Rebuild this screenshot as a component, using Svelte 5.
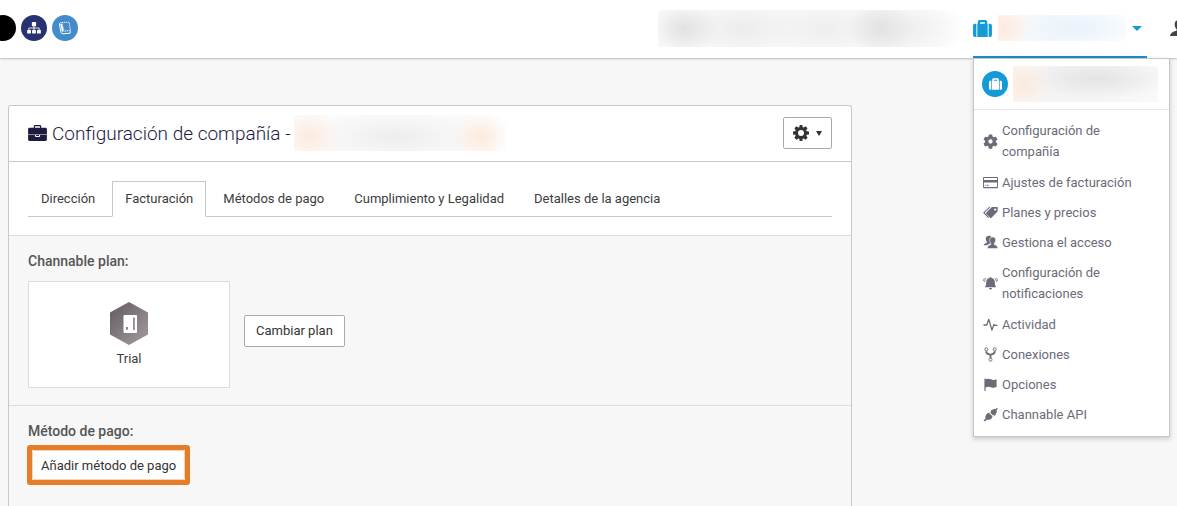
<script lang="ts">
	const tabs = ['Dirección', 'Facturación', 'Métodos de pago', 'Cumplimiento y Legalidad', 'Detalles de la agencia']

	const menuItems = [
		{ icon: 'gear', label: 'Configuración de compañía', tall: true },
		{ icon: 'card', label: 'Ajustes de facturación' },
		{ icon: 'tags', label: 'Planes y precios' },
		{ icon: 'users', label: 'Gestiona el acceso' },
		{ icon: 'bell', label: 'Configuración de notificaciones', tall: true },
		{ icon: 'pulse', label: 'Actividad' },
		{ icon: 'fork', label: 'Conexiones' },
		{ icon: 'flag', label: 'Opciones' },
		{ icon: 'plug', label: 'Channable API' }
	]

	let activeTab = $state('Facturación')
	let menuOpen = $state(true)
</script>

{#snippet suitcase()}
	<svg viewBox="0 0 20 18" fill="currentColor" aria-hidden="true">
		<path d="M3.500 4v14H2a2 2 0 0 1-2-2V6a2 2 0 0 1 2-2zM16.500 4v14H18a2 2 0 0 0 2-2V6a2 2 0 0 0-2-2z" />
		<path fill-rule="evenodd" d="M4.500 4H5V2q0-2 2-2h6q2 0 2 2v2h.5v14h-11zM7.500 2.300V4h5V2.300z" />
	</svg>
{/snippet}

{#snippet menuIcon(name: string)}
	<svg class="menu-icon" viewBox="0 0 16 16" fill="currentColor" aria-hidden="true">
		{#if name === 'gear'}
			<path fill-rule="evenodd" d="M6.300.5h3.400l.5 2.200 1.400.8 2.200-.7 1.700 3-1.700 1.500v1.500l1.700 1.500-1.700 3-2.200-.7-1.400.8-.5 2.200H6.300l-.5-2.200-1.400-.8-2.200.7-1.700-3L2.200 8.800V7.300L.5 5.800l1.700-3 2.200.7 1.400-.8zM8 5.700a2.300 2.300 0 1 0 0 4.600 2.300 2.300 0 0 0 0-4.600z" />
		{:else if name === 'card'}
			<path fill-rule="evenodd" d="M1 2h14q1 0 1 1v10q0 1-1 1H1q-1 0-1-1V3q0-1 1-1zM1 3.200v2h14v-2zM1 8v4.800h14V8z" />
			<path d="M2 10.500h1v1H2zM4 10.500h2v1H4z" />
		{:else if name === 'tags'}
			<path fill-rule="evenodd" d="M9.500 2.200 15 2q.8 0 .8.800L15.500 7 9 13.500q-.7.600-1.400 0L3.600 9.500q-.6-.7 0-1.400zM13 3.700a1.200 1.200 0 1 0 0 2.400 1.200 1.200 0 0 0 0-2.400z" />
			<path d="M7.200 2.300 1 8.200l5 5.300" fill="none" stroke="currentColor" stroke-width="1.200" />
		{:else if name === 'users'}
			<path d="M5.500 1q2-1 3.300 1Q7 4 7.500 7l1 1.500-4.500 2.500H.5q0-1.800 3.500-2.800V7Q2.500 5.500 3 3.200 3.500 1 5.500 1z" />
			<path d="M10.500 2c2.200 0 3.300 1.700 3 3.700-.2 1.500-.7 2.700-1.500 3.300v1.200c2.200.8 3.700 1.500 4 4.300H4.500c.2-2.800 1.700-3.500 3.800-4.300V9c-.8-.8-1.200-2-1.200-3.500C7.300 3.200 8.500 2 10.500 2z" stroke="#fff" stroke-width=".6" />
		{:else if name === 'bell'}
			<path d="M8 1q1 0 1 1.200 3.500.7 3.500 4.300 0 3.500 1.500 5.500H2q1.500-2 1.500-5.500Q3.500 2.900 7 2.200 7 1 8 1zM6.300 12.700h3.400q-.3 1.800-1.700 1.800t-1.700-1.800z" />
			<path d="M3.300 2.200Q1.800 3.800 1.700 6.500M12.700 2.200q1.500 1.600 1.600 4.300M1.600 2.200Q.6 3.500.3 5.500M14.400 2.200q1 1.300 1.300 3.300" fill="none" stroke="currentColor" stroke-width=".8" />
		{:else if name === 'pulse'}
			<path d="M.5 8.500H4L6.200 2.500l3.300 11.500L11.700 8l.8 1h3" fill="none" stroke="currentColor" stroke-width="1.400" stroke-linejoin="round" />
		{:else if name === 'fork'}
			<g fill="none" stroke="currentColor">
				<circle cx="3.500" cy="2.500" r="1.600" /><circle cx="12.500" cy="2.500" r="1.600" /><circle cx="8" cy="13.500" r="1.600" />
				<path d="M3.500 4.500q0 2.500 2.300 3 2.200.5 2.200 1.500v3M12.500 4.500q0 2.500-2.300 3Q8 8 8 9" stroke-width="2" />
			</g>
		{:else if name === 'flag'}
			<path d="M1.500 1.500h1.200v1q2.800-1.500 5.800 0t6 0v8q-3 1.700-6 .400t-5.800.2V15H1.500z" />
		{:else if name === 'plug'}
			<path d="m8.500 3.800 3-1.800q1-.2 1.700.3L14.800.8l1 1-1.400 1.600q.7.800.2 2.300l-1.800 3.500-2.500-.6L8 6.500zM6.700 6l1.500 2.300 2 1.200q-.5 2.700-2.200 3.500-2.200 1-4 .6L1.800 15.500l-1.200-1.200 2-2.100q-.5-2.200.7-3.900Q4.700 6 6.700 6z" />
		{/if}
	</svg>
{/snippet}

<div class="page">
	<header class="topbar">
		<nav class="apps" aria-label="Aplicaciones">
			<button class="app black" aria-label="Inicio"></button>
			<button class="app navy" aria-label="Estructura">
				<svg viewBox="0 0 16 14" width="14" height="12" fill="currentColor">
					<rect x="5.500" y="0" width="5" height="5" rx="1" />
					<rect x="0" y="9" width="4.500" height="4.500" rx="1" />
					<rect x="5.750" y="9" width="4.500" height="4.500" rx="1" />
					<rect x="11.500" y="9" width="4.500" height="4.500" rx="1" />
					<path d="M2 9V7h12v2M8 4v5" fill="none" stroke="currentColor" />
				</svg>
			</button>
			<button class="app blue" aria-label="Documentación">
				<svg viewBox="0 0 14 14" width="14" height="14" fill="none" stroke="currentColor">
					<path d="M3.800 1.500 11 1.200l1.500 8.300-6.500.7z" stroke-width=".8" stroke-dasharray="1.500 .5" />
					<path d="M2.800 1.500Q1 2 1.500 4l1.600 7.500q.5 1.500 2 1.300l7-.6.3-2" />
					<path d="M3 3 4.800 10.500" stroke-width="1.600" />
				</svg>
			</button>
		</nav>

		<div class="redacted search"></div>

		<div class="company">
			<button class="company-toggle" aria-label="Compañía" aria-expanded={menuOpen} onclick={() => (menuOpen = !menuOpen)}>
				{@render suitcase()}
				<span class="redacted company-name"></span>
				<span class="caret"></span>
			</button>

			{#if menuOpen}
				<div class="menu">
					<div class="menu-head">
						<span class="badge">{@render suitcase()}</span>
						<span class="redacted menu-name"></span>
					</div>
					<ul>
						{#each menuItems as item}
							<li>
								<a href="#{item.icon}" class:tall={item.tall}>
									{@render menuIcon(item.icon)}
									<span>{item.label}</span>
								</a>
							</li>
						{/each}
					</ul>
				</div>
			{/if}
		</div>

		<button class="user" aria-label="Usuario">
			<svg viewBox="0 0 18 16" width="18" height="16" fill="currentColor">
				<path d="M9 0c3 0 4.500 2 4.300 5-.2 2-.9 3.400-2 4.300v1.200c3 1 6 2 6.700 5.500H0c.7-3.500 3.700-4.500 6.700-5.500V9.300c-1.100-.9-1.800-2.300-2-4.300C4.500 2 6 0 9 0z" />
			</svg>
		</button>
	</header>

	<main class="card">
		<div class="card-head">
			<svg class="briefcase" viewBox="0 0 20 17" aria-hidden="true">
				<path fill="currentColor" fill-rule="evenodd" d="M6 3V1.500Q6 0 7.500 0h5Q14 0 14 1.500V3h4.500Q20 3 20 4.500V10H0V4.500Q0 3 1.500 3zM7.300 1.300V3h5.400V1.300zM0 10.700h7.300v1q0 1 1 1h3.400q1 0 1-1v-1H20v4.800q0 1.500-1.500 1.500h-17Q0 17 0 15.500zM8.500 10.700h3v.9h-3z" />
			</svg>
			<h1>Configuración de compañía -</h1>
			<span class="redacted title-name"></span>
			<button class="btn settings" aria-label="Ajustes">
				<svg viewBox="0 0 16 16" width="16" height="16" fill="currentColor">
					<path fill-rule="evenodd" d="M6.700 0h2.600l.4 2.200 1 .4L12.500 1.300l2 2-1.300 1.900.4 1L16 6.600v2.800l-2.300.4-.4 1 1.300 1.900-2 2-1.900-1.300-1 .4L9.300 16H6.700l-.4-2.200-1-.4-1.900 1.300-2-2 1.300-1.900-.4-1L0 9.400V6.600l2.300-.4.4-1-1.300-1.900 2-2 1.900 1.300 1-.4zM8 5a3 3 0 1 0 0 6 3 3 0 0 0 0-6z" />
				</svg>
				<span class="caret small"></span>
			</button>
		</div>

		<div class="tabs-wrap">
			<div class="tabs" role="tablist">
				{#each tabs as tab}
					<button class="tab" class:active={tab === activeTab} role="tab" aria-selected={tab === activeTab} onclick={() => (activeTab = tab)}>{tab}</button>
				{/each}
			</div>
		</div>

		<section>
			<h2>Channable plan:</h2>
			<div class="plan-row">
				<div class="plan">
					<svg viewBox="0 0 38 43" width="38" height="43" aria-hidden="true">
						<defs>
							<linearGradient id="hex" x1="0" y1="0" x2="1" y2="1">
								<stop offset="0" stop-color="#625a5e" />
								<stop offset="1" stop-color="#a49ca2" />
							</linearGradient>
						</defs>
						<path d="M19 0 38 10.500v22L19 43 0 32.500v-22z" fill="url(#hex)" />
						<rect x="13.500" y="13" width="13.500" height="18" rx="1" fill="#fff" />
						<path d="M23.200 15.500h1.500V28h-1.500zM16 25h1.800v2.800H16z" fill="#7d7479" />
					</svg>
					<span>Trial</span>
				</div>
				<button class="btn">Cambiar plan</button>
			</div>
		</section>

		<section>
			<h2>Método de pago:</h2>
			<div class="highlight">
				<button class="btn">Añadir método de pago</button>
			</div>
		</section>
	</main>
</div>

<style>
	:global(body) {
		background: #f7f7f7;
		font-family: Roboto, 'Liberation Sans', sans-serif;
		font-size: 13px;
		color: #3c3c3c;
	}

	.page {
		display: flex;
		flex-direction: column;
		min-height: 100vh;
		overflow-x: clip;
	}

	button {
		font: inherit;
		color: inherit;
		cursor: pointer;
	}

	svg {
		flex: none;
	}

	/* Top bar */
	.topbar {
		display: flex;
		align-items: center;
		box-sizing: border-box;
		height: 58px;
		padding-bottom: 2px;
		background: #fff;
		box-shadow: 0 1px 2px rgba(0, 0, 0, 0.25);
	}

	.apps {
		display: flex;
		gap: 5px;
		margin-left: -10px;
	}

	.app {
		display: flex;
		align-items: center;
		justify-content: center;
		width: 26px;
		height: 26px;
		padding: 0;
		border: 0;
		border-radius: 50%;
		color: #fff;
	}

	.black {
		background: #000;
	}

	.navy {
		background: #263272;
	}

	.blue {
		background: #438bca;
	}

	.redacted {
		display: block;
		flex: none;
	}

	.search {
		width: 302px;
		height: 37px;
		margin-left: auto;
		margin-right: 13px;
		background:
			radial-gradient(ellipse 34px 26px at 27px 50%, #e1e1e1, transparent),
			radial-gradient(ellipse 34px 28px at 222px 50%, #e2e2e2, transparent),
			radial-gradient(ellipse 60px 30px at 85px 50%, #ececec, transparent),
			radial-gradient(ellipse 60px 30px at 165px 50%, #eee, transparent),
			radial-gradient(ellipse 60px 30px at 250px 50%, #eee, transparent),
			linear-gradient(90deg, #f9f9f9 80%, #fff);
	}

	.company {
		position: relative;
		width: 174px;
		height: 58px;
		margin-bottom: -2px;
	}

	.company-toggle {
		display: flex;
		align-items: center;
		width: 100%;
		height: 100%;
		padding: 0;
		border: 0;
		border-bottom: 2px solid #1a90c6;
		background: none;
		color: #149bd7;
	}

	.company-toggle svg {
		width: 19px;
		height: 17px;
	}

	.company-name {
		width: 128px;
		height: 26px;
		margin: 0 6px;
		background:
			radial-gradient(ellipse 26px 24px at 6px 50%, #fdeadd, transparent),
			radial-gradient(ellipse 60px 22px at 80px 50%, #e9f3fb, transparent),
			linear-gradient(90deg, #fcf9f7, #f3f8fc 40%, #fcfdfe);
	}

	.caret {
		border: 5px solid transparent;
		border-top-color: currentColor;
		border-bottom: 0;
	}

	.caret.small {
		border-width: 5px 3px 0;
	}

	.user {
		display: flex;
		margin-left: 23px;
		margin-right: -11px;
		padding: 0;
		border: 0;
		background: none;
		color: #444;
	}

	/* Company menu */
	.menu {
		position: absolute;
		top: 100%;
		left: 0;
		z-index: 1;
		box-sizing: border-box;
		width: 197px;
		border: 1px solid #c6c6c8;
		background: #fff;
		box-shadow: 0 2px 5px rgba(0, 0, 0, 0.18);
	}

	.menu-head {
		display: flex;
		align-items: center;
		gap: 5px;
		padding: 7px 8px;
		border-bottom: 1px solid #e8e8e8;
	}

	.badge {
		display: flex;
		align-items: center;
		justify-content: center;
		width: 26px;
		height: 26px;
		border-radius: 50%;
		background: #149bd7;
		color: #fff;
	}

	.badge svg {
		width: 13px;
		height: 12px;
	}

	.menu-name {
		width: 145px;
		height: 36px;
		background:
			radial-gradient(ellipse 28px 26px at 10px 50%, #fbeadd, transparent),
			radial-gradient(ellipse 75px 20px at 85px 35%, #e4e4e6, transparent),
			linear-gradient(90deg, #faf7f5, #f3f3f4 40%, #f9f9f9);
	}

	ul {
		margin: 0;
		padding: 5px 9px 7px;
		list-style: none;
	}

	.menu a {
		display: flex;
		align-items: center;
		gap: 4px;
		padding: 5px 0 4px;
		color: #6c6b78;
		line-height: 21px;
		text-decoration: none;
	}

	.menu a.tall {
		padding: 5px 30px 5px 0;
	}

	.menu a:hover {
		color: #149bd7;
	}

	.menu-icon {
		width: 15px;
		height: 15px;
	}

	/* Card */
	.card {
		display: flex;
		flex: 1;
		flex-direction: column;
		box-sizing: border-box;
		width: calc(100% - 16px);
		max-width: 844px;
		margin: 47px 8px 0;
		border: 1px solid #c8c8ca;
		border-bottom: 0;
		border-radius: 3px 3px 0 0;
	}

	.card-head {
		display: flex;
		align-items: center;
		box-sizing: border-box;
		height: 56px;
		padding: 0 19px 1px;
		border-bottom: 1px solid #c8c8ca;
		background: #fff;
		border-radius: 3px 3px 0 0;
		color: #1c1b3f;
	}

	.briefcase {
		width: 19px;
		height: 16px;
		margin-right: 5px;
	}

	h1 {
		margin: 0;
		font-size: 19px;
		font-weight: 300;
	}

	.title-name {
		width: 212px;
		height: 36px;
		margin-left: 3px;
		background:
			radial-gradient(ellipse 28px 26px at 16px 60%, #fdeadd, transparent),
			radial-gradient(ellipse 30px 26px at 187px 60%, #fdeadd, transparent),
			radial-gradient(ellipse 90px 26px at 102px 60%, #ededed, transparent),
			linear-gradient(90deg, #fbfbfb 80%, #fff);
	}

	.btn {
		box-sizing: border-box;
		height: 32px;
		padding: 0 11px;
		border: 1px solid #a9a9ae;
		border-radius: 2px;
		background: #fff;
		color: #333;
	}

	.settings {
		display: flex;
		align-items: center;
		gap: 7px;
		margin-left: auto;
		padding: 0 9px;
	}

	.tabs-wrap {
		padding: 19px 19px 18px;
		background: #fff;
	}

	.tabs {
		display: flex;
		border-bottom: 1px solid #c8c8ca;
	}

	.tab {
		box-sizing: border-box;
		height: 36px;
		margin-bottom: -1px;
		margin-right: 4px;
		padding: 0 12px 2px;
		border: 1px solid transparent;
		background: none;
	}

	.tab.active {
		border-color: #c8c8ca;
		border-bottom-color: #fff;
		background: #fff;
	}

	section {
		padding: 17px 19px;
		border-top: 1px solid #dcdcde;
	}

	h2 {
		margin: 0;
		color: #555;
		font-size: 14px;
		font-weight: 500;
		line-height: 17px;
	}

	.plan-row {
		display: flex;
		align-items: center;
		gap: 14px;
		margin-top: 11px;
	}

	.plan-row .btn {
		margin-bottom: 8px;
	}

	.plan {
		display: flex;
		flex-direction: column;
		align-items: center;
		justify-content: center;
		gap: 6px;
		box-sizing: border-box;
		width: 202px;
		height: 107px;
		padding-bottom: 2px;
		border: 1px solid #dcdcde;
		background: #fff;
	}

	.highlight {
		width: fit-content;
		margin-top: 5px;
		margin-left: -1px;
		border: 5px solid #e87b26;
		border-radius: 3px;
	}

	.highlight .btn {
		display: block;
		height: 30px;
		padding: 0 8px;
		border-color: #f3d3bb;
	}
</style>
